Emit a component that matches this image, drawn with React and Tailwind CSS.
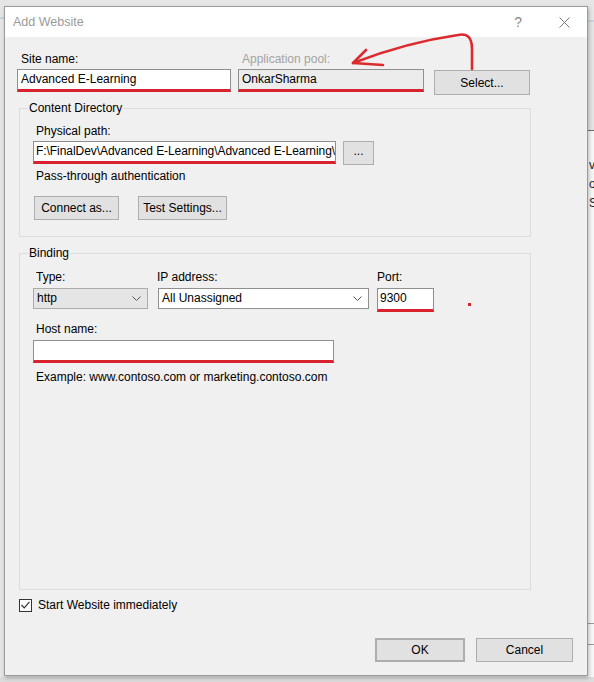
import React from 'react'

const Chevron = () => (
  <svg width="9" height="5" viewBox="0 0 9 5" className="shrink-0">
    <polyline points="0.5,0.5 4.5,4.5 8.5,0.5" fill="none" stroke="#555" strokeWidth="1" />
  </svg>
)

const TextBox = ({ value = '', className = '', disabled = false }) => (
  <div
    className={`h-[23px] border border-[#8f8f8f] border-b-[3px] border-b-[#d7232d] leading-[19px] whitespace-nowrap overflow-hidden ${disabled ? 'bg-[#ececec]' : 'bg-white'} ${className}`}
  >
    {value}
  </div>
)

const Button = ({ children, className = '' }) => (
  <div className={`flex items-center justify-center border border-[#adadad] bg-[#e1e1e1] text-black ${className}`}>
    {children}
  </div>
)

const Select = ({ value, className = '' }) => (
  <div className={`h-[21px] border flex items-center justify-between pl-[3px] pr-[6px] ${className}`}>
    <span className="leading-[19px]">{value}</span>
    <Chevron />
  </div>
)

const Group = ({ title, className = '', children }) => (
  <div className={`relative ml-[2px] w-[512px] border border-[#dcdcdc] ${className}`}>
    <span className="absolute -top-[8px] left-[8px] bg-[#f0f0f0] px-[1px] leading-[15px]">{title}</span>
    {children}
  </div>
)

export default function App() {
  return (
    <div className="relative w-[594px] h-[682px] overflow-hidden bg-[#e6e6e6] font-['Liberation_Sans',Arial,sans-serif] text-[12px] text-black">
      {/* window behind the dialog */}
      <div className="absolute left-0 top-[17px] w-[6px] h-[2px] bg-[#c9d3dd]" />
      <div className="absolute left-[586px] top-0 w-[8px] h-[682px] flex flex-col bg-[#f7f7f7]">
        <div className="h-[20px] bg-[#e6e6e6]" />
        <div className="h-[2px] bg-[#c9d3dd]" />
        <div className="h-[108px] bg-[#e4e4e4]" />
        <div className="h-[1px] bg-[#6b6b6b]" />
        <div className="pt-[26px] pl-[3px] flex flex-col gap-[3px] leading-[16px] text-[#222]">
          <span>va</span>
          <span>o</span>
          <span>S\</span>
        </div>
        <div className="mt-[412px] h-[1px] bg-[#9a9a9a]" />
        <div className="mt-[20px] h-[1px] bg-[#9a9a9a]" />
      </div>
      <div className="absolute left-0 top-[677px] w-[594px] h-[5px] bg-[#dcdcdc]" />

      {/* dialog */}
      <div className="absolute left-[4px] top-[6px] w-[584px] h-[670px] flex flex-col border border-[#9b9b9b] shadow-[1px_2px_4px_rgba(0,0,0,0.25)] bg-[#f0f0f0]">
        <div className="h-[30px] bg-white flex items-center pl-[8px] pr-[17px] text-[#9a9a9a] text-[12.5px]">
          <span>Add Website</span>
          <span className="ml-auto text-[#8a8a8a] text-[14px]">?</span>
          <svg width="11" height="11" viewBox="0 0 11 11" className="ml-[37px]">
            <path d="M0.5 0.5 L10.5 10.5 M10.5 0.5 L0.5 10.5" stroke="#7a7a7a" strokeWidth="1" />
          </svg>
        </div>

        <div className="flex-1 flex flex-col pl-[12px] pt-[15px]">
          {/* site name / application pool */}
          <div className="flex items-start">
            <div className="w-[214px]">
              <div className="pl-[4px] leading-[15px]">Site name:</div>
              <TextBox value="Advanced E-Learning" className="mt-[2px] pl-[3px]" />
            </div>
            <div className="ml-[7px] w-[186px]">
              <div className="pl-[4px] leading-[15px] text-[#a3a3a3]">Application pool:</div>
              <TextBox value="OnkarSharma" disabled className="mt-[2px] pl-[3px]" />
            </div>
            <Button className="ml-[10px] mt-[18px] w-[96px] h-[25px]">Select...</Button>
          </div>

          {/* content directory */}
          <Group title="Content Directory" className="mt-[13px] h-[129px]">
            <div className="pl-[13px] pt-[14px]">
              <div className="pl-[3px] leading-[16px]">Physical path:</div>
              <div className="flex items-start mt-[2px]">
                <TextBox
                  value="F:\FinalDev\Advanced E-Learning\Advanced E-Learning\"
                  className="w-[303px] pl-[2px] tracking-[-0.06px]"
                />
                <Button className="ml-[7px] w-[31px] h-[24px] pb-[4px]">...</Button>
              </div>
              <div className="pl-[3px] mt-[3px] leading-[16px]">Pass-through authentication</div>
              <div className="flex mt-[12px] ml-[1px]">
                <Button className="w-[85px] h-[24px]">Connect as...</Button>
                <Button className="ml-[19px] w-[89px] h-[24px]">Test Settings...</Button>
              </div>
            </div>
          </Group>

          {/* binding */}
          <Group title="Binding" className="mt-[16px] h-[337px]">
            <div className="pl-[13px] pt-[15px]">
              <div className="flex items-start">
                <div className="w-[115px]">
                  <div className="pl-[3px] leading-[16px]">Type:</div>
                  <Select value="http" className="mt-[3px] bg-[#e5e5e5] border-[#acacac]" />
                </div>
                <div className="ml-[10px] w-[211px]">
                  <div className="-ml-[1px] leading-[16px]">IP address:</div>
                  <Select value="All Unassigned" className="mt-[3px] bg-white border-[#8f8f8f]" />
                </div>
                <div className="ml-[8px] w-[57px]">
                  <div className="leading-[16px]">Port:</div>
                  <TextBox value="9300" className="mt-[3px] h-[24px] pl-[2px]" />
                </div>
                <div className="ml-[34px] mt-[34px] w-[3px] h-[3px] bg-[#d7232d]" />
              </div>
              <div className="pl-[3px] mt-[9px] leading-[16px]">Host name:</div>
              <TextBox className="mt-[3px] w-[301px]" />
              <div className="pl-[3px] mt-[6px] leading-[16px]">Example: www.contoso.com or marketing.contoso.com</div>
            </div>
          </Group>

          {/* start immediately */}
          <div className="flex items-center mt-[7px] ml-[2px]">
            <div className="w-[13px] h-[13px] border border-[#333] bg-white flex items-center justify-center">
              <svg width="9" height="8" viewBox="0 0 9 8">
                <polyline points="0.5,4 3.2,6.8 8.5,0.8" fill="none" stroke="#333" strokeWidth="1.2" />
              </svg>
            </div>
            <span className="ml-[6px] leading-[16px]">Start Website immediately</span>
          </div>

          {/* dialog buttons */}
          <div className="flex justify-end pr-[14px] mt-[25px]">
            <Button className="w-[90px] h-[24px] border-2 border-[#0078d7]">OK</Button>
            <Button className="ml-[11px] w-[97px] h-[24px]">Cancel</Button>
          </div>
        </div>
      </div>

      {/* hand-drawn annotation */}
      <svg className="absolute left-0 top-0 pointer-events-none" width="594" height="682" viewBox="0 0 594 682">
        <path
          d="M472 69 L472 49 C472 38 468 33 458 35 C430 39 392 48 353 63"
          fill="none"
          stroke="#dc2a2f"
          strokeWidth="2.6"
          strokeLinecap="round"
          strokeLinejoin="round"
        />
        <path
          d="M366 50 L353 63 L383 65"
          fill="none"
          stroke="#dc2a2f"
          strokeWidth="2.6"
          strokeLinecap="round"
          strokeLinejoin="round"
        />
      </svg>
    </div>
  )
}
